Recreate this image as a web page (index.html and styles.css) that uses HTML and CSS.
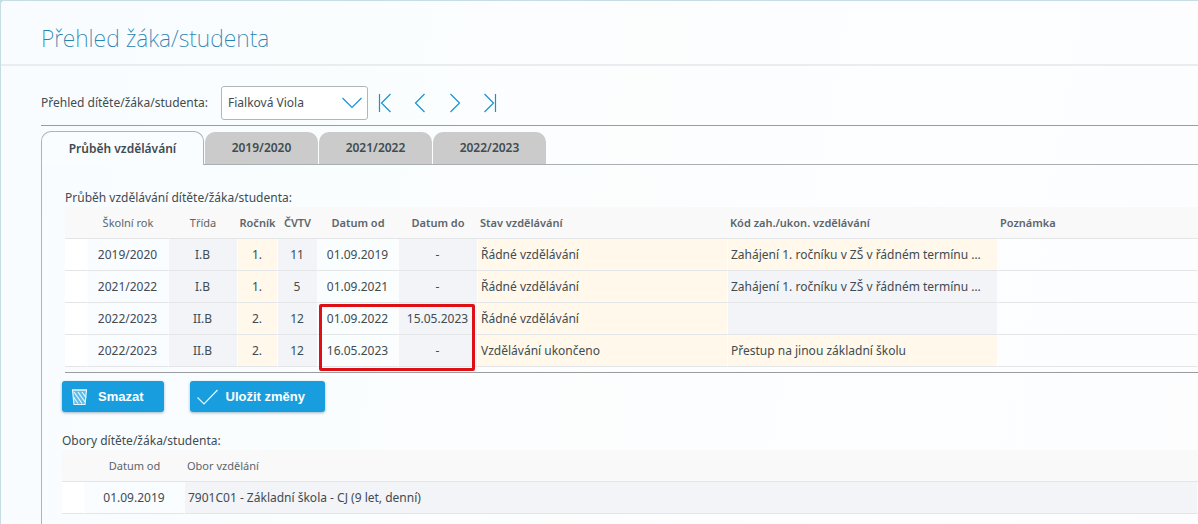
FILE: index.html
```html
<!DOCTYPE html>
<html lang="cs">
<head>
<meta charset="utf-8">
<title>Přehled žáka/studenta</title>
<link rel="stylesheet" href="styles.css">
</head>
<body>
<main class="page">
  <header class="page-header"><h1>Přehled žáka/studenta</h1></header>
  <div class="content">
    <div class="toolbar">
      <label for="student">Přehled dítěte/žáka/studenta:</label>
      <div class="select">
        <select id="student"><option>Fialková Viola</option></select>
        <svg class="chevron" width="20" height="12" viewBox="0 0 20 12"><path d="M.5 1 10 10.500 19.500 1"/></svg>
      </div>
      <div class="pager">
        <button type="button" aria-label="První"><svg width="14" height="20" viewBox="0 0 14 20"><path d="M1.500 1v18M12.500 1 3.500 10l9 9"/></svg></button>
        <button type="button" aria-label="Předchozí"><svg width="14" height="20" viewBox="0 0 14 20"><path d="M11.500 1 2.500 10l9 9"/></svg></button>
        <button type="button" aria-label="Další"><svg width="14" height="20" viewBox="0 0 14 20"><path d="M2.500 1 11.500 10l-9 9"/></svg></button>
        <button type="button" aria-label="Poslední"><svg width="14" height="20" viewBox="0 0 14 20"><path d="M12.500 1v18M1.500 1l9 9-9 9"/></svg></button>
      </div>
    </div>
    <div class="tabs" role="tablist">
      <button type="button" role="tab" class="tab active" aria-selected="true">Průběh vzdělávání</button>
      <button type="button" role="tab" class="tab">2019/2020</button>
      <button type="button" role="tab" class="tab">2021/2022</button>
      <button type="button" role="tab" class="tab">2022/2023</button>
    </div>
    <div class="panel" role="tabpanel">
      <section class="history">
        <h2>Průběh vzdělávání dítěte/žáka/studenta:</h2>
        <div class="grid-wrap">
          <table class="grid">
            <colgroup><col class="w23"><col class="w81"><col class="w69"><col class="w40"><col class="w40"><col class="w81"><col class="w79"><col class="w250"><col class="w270"><col></colgroup>
            <thead>
              <tr><th></th><th class="light">Školní rok</th><th class="light">Třída</th><th>Ročník</th><th>ČVTV</th><th>Datum od</th><th>Datum do</th><th class="left">Stav vzdělávání</th><th class="left">Kód zah./ukon. vzdělávání</th><th class="left">Poznámka</th></tr>
            </thead>
            <tbody>
              <tr><td class="handle"></td><td>2019/2020</td><td class="gray">I.B</td><td class="cream">1.</td><td class="gray">11</td><td>01.09.2019</td><td class="gray">-</td><td class="cream left">Řádné vzdělávání</td><td class="cream left">Zahájení 1. ročníku v ZŠ v řádném termínu …</td><td></td></tr>
              <tr><td class="handle"></td><td>2021/2022</td><td class="gray">I.B</td><td class="cream">1.</td><td class="gray">5</td><td>01.09.2021</td><td class="gray">-</td><td class="cream left">Řádné vzdělávání</td><td class="gray left">Zahájení 1. ročníku v ZŠ v řádném termínu …</td><td></td></tr>
              <tr><td class="handle"></td><td>2022/2023</td><td class="gray">II.B</td><td class="cream">2.</td><td class="gray">12</td><td>01.09.2022</td><td class="gray">15.05.2023</td><td class="cream left">Řádné vzdělávání</td><td class="gray left"></td><td></td></tr>
              <tr><td class="handle"></td><td>2022/2023</td><td class="gray">II.B</td><td class="cream">2.</td><td class="gray">12</td><td>16.05.2023</td><td class="gray">-</td><td class="cream left">Vzdělávání ukončeno</td><td class="cream left">Přestup na jinou základní školu</td><td></td></tr>
            </tbody>
          </table>
          <div class="highlight"></div>
        </div>
      </section>
      <div class="actions">
        <button type="button" class="btn">
          <svg width="21" height="18" viewBox="0 0 21 18"><path class="bin" d="M3.500 2h14l-1.500 14.500H5z"/><path d="M3 2h15M5 4l8 11.500M9 4l7 10M13 4l4 5.500M4.500 9 9 15.500"/></svg>
          <span>Smazat</span>
        </button>
        <button type="button" class="btn">
          <svg width="21" height="16" viewBox="0 0 21 16"><path d="M.5 8.500 7 15 20.500 1"/></svg>
          <span>Uložit změny</span>
        </button>
      </div>
      <section>
        <h2>Obory dítěte/žáka/studenta:</h2>
        <table class="grid">
          <colgroup><col class="w23"><col class="w100"><col></colgroup>
          <thead><tr><th></th><th class="light">Datum od</th><th class="light left">Obor vzdělání</th></tr></thead>
          <tbody><tr><td class="handle"></td><td>01.09.2019</td><td class="gray left">7901C01 - Základní škola - CJ (9 let, denní)</td></tr></tbody>
        </table>
      </section>
    </div>
  </div>
</main>
</body>
</html>
```
FILE: styles.css
```css
* { box-sizing: border-box; }
body {
  margin: 0;
  background: #c3dbe6;
  color: #414b50;
  font: 12px/18px "Noto Sans", "Open Sans", sans-serif;
}
button, select { font: inherit; color: inherit; }
svg { fill: none; stroke: #1592d6; stroke-width: 1.2; display: block; }
.page {
  min-height: 100vh;
  border: solid #c8dce4;
  border-width: 1px 0 0 1px;
  border-radius: 4px 0 0 0;
  background: linear-gradient(100deg, #f8fcff, #fcfefe 50%, #fdfdfe);
  overflow: hidden;
}
.page-header { border-bottom: 2px solid #e9edf0; padding: 20px 40px 9px; }
h1 { margin: 0; font-size: 23px; line-height: 34px; font-weight: 200; color: #2b83b0; }
.content { padding: 20px 0 0 40px; }
.toolbar {
  display: flex;
  align-items: center;
  padding-bottom: 5px;
  border-bottom: 1px solid #999d9f;
}
.toolbar label { min-width: 174px; }
.select { position: relative; width: 147px; margin: 0 10px 0 6px; }
.select select {
  appearance: none;
  display: block;
  width: 100%;
  height: 34px;
  padding: 0 6px;
  border: 1px solid #b0b7ba;
  border-radius: 3px;
  background: #fff;
}
.chevron { position: absolute; right: 6px; top: 11px; pointer-events: none; }
.pager { display: flex; gap: 21px; }
.pager button { padding: 0; border: 0; background: none; }
.tabs { display: flex; align-items: flex-end; margin-top: 5px; border-bottom: 1px solid #a9afb2; }
.tab {
  height: 32px;
  min-width: 113px;
  margin: 0 0 0 1px;
  padding: 0 24px;
  border: 0;
  border-radius: 10px 10px 0 0;
  background: #cbcbcb;
  font-weight: 600;
}
.tab.active {
  height: 34px;
  min-width: 163px;
  margin: 0 0 -1px;
  border: 1px solid #a9b4bb;
  border-bottom: 0;
  background: #fafdff;
}
.panel { padding: 24px 0 10px 20px; border-left: 1px solid #a9b4bb; }
h2 { margin: 0; font-size: 12px; line-height: 18px; font-weight: 400; }
.history { padding-left: 3px; }
.grid-wrap { position: relative; padding-bottom: 5px; border-bottom: 1px solid #999d9f; }
.grid { width: 100%; table-layout: fixed; border-collapse: separate; border-spacing: 0; }
.grid th, .grid td {
  height: 32px;
  padding: 0 1px 0 0;
  border-bottom: 1px solid #e3e5e7;
  text-align: center;
  white-space: nowrap;
  overflow: hidden;
}
.grid th { background: #f9f9f9; color: #5c656b; font-size: 11px; font-weight: 600; }
.grid th.light { font-weight: 400; }
.grid td { border-right: 1px solid #fdfdfd; }
.grid th.left { text-align: left; padding-left: 2px; }
.grid td.left { text-align: left; padding-left: 3px; }
.grid .handle { background: #fff; }
.gray { background: #f2f4f7; }
.cream { background: #fff8eb; }
.w23 { width: 23px; } .w81 { width: 81px; } .w69 { width: 69px; } .w40 { width: 40px; }
.w79 { width: 79px; } .w250 { width: 250px; } .w270 { width: 270px; } .w100 { width: 100px; }
.highlight {
  position: absolute;
  left: 254px;
  top: 97px;
  width: 156px;
  height: 67px;
  border: 3px solid #dc1015;
  border-radius: 2px;
}
.actions { display: flex; gap: 26px; margin: 8px 0 20px; }
.btn {
  display: flex;
  align-items: center;
  gap: 8px;
  height: 31px;
  padding: 0 20px 0 7px;
  border: 0;
  border-radius: 3px;
  background: #189ede;
  box-shadow: 0 1px 3px #9db4c0;
  color: #fff;
  font: bold 13px/20px "Liberation Sans", Arial, sans-serif;
}
.btn svg { stroke: #e5f7ff; }
.bin { fill: #5ebbe9; }
```
